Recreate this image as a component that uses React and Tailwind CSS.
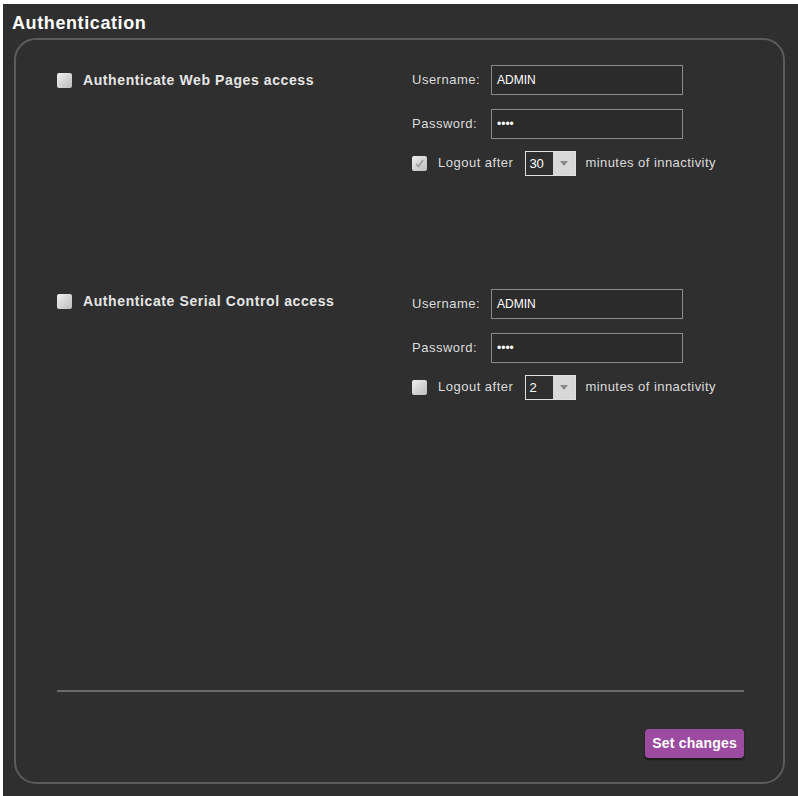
import * as React from "react";

const font = { fontFamily: '"Liberation Sans", Arial, sans-serif' };

export default function App() {
  return (
    <div className="w-[798px] h-[796px] bg-white pt-[4px] pl-[3px]" style={font}>
      <div className="w-full h-full bg-[#2f2f2f] flex flex-col">
        <h1 className="text-white font-bold text-[18px] pl-[9px] pt-[9px] leading-[21px] tracking-[0.6px]">Authentication</h1>
        <div className="mt-[4px] ml-[11px] w-[771px] h-[746px] border-2 border-[#5c5c5c] rounded-[22px] flex flex-col px-[41px]">
          <Block label="Authenticate Web Pages access" top="pt-[25px]" lead="pt-[8px]" logout="30" checked />
          <Block label="Authenticate Serial Control access" top="pt-[113px]" lead="pt-[5px]" logout="2" />
          <div className="flex-1" />
          <div className="h-[2px] bg-[#6a6a6a] mr-[-2px]" />
          <div className="flex justify-end mt-[37px] mb-[24px] mr-[-2px]">
            <button className="h-[29px] px-[7px] rounded-[4px] bg-[#9c4ca0] text-white font-bold text-[14px] tracking-[0.2px] shadow-[0_2px_2px_rgba(0,0,0,0.5)]">
              Set changes
            </button>
          </div>
        </div>
      </div>
    </div>
  );
}

function Block({ label, top, lead, logout, checked }) {
  return (
    <div className={`flex ${top}`}>
      <div className={`w-[355px] flex items-start gap-[11px] ${lead}`}>
        <Box />
        <span className="text-[#e6e6e6] font-bold text-[14px] leading-[15px] tracking-[0.6px]">{label}</span>
      </div>
      <div className="flex flex-col">
        <Field label="Username:" value="ADMIN" />
        <div className="h-[14px]" />
        <Field label="Password:" value="••••" />
        <div className="flex items-center mt-[11px] h-[26px]">
          <Box checked={checked} />
          <span className="ml-[11px] text-[#dcdcdc] text-[13px] tracking-[0.5px]">Logout after</span>
          <div className="ml-[12px] w-[51px] h-[25px] border border-[#e0e0e0] flex">
            <span className="flex-1 text-white text-[13px] pl-[3px] leading-[23px]">{logout}</span>
            <span className="w-[22px] bg-[#d8d8d8] flex items-center justify-center">
              <svg width="8" height="5" viewBox="0 0 8 5"><path d="M0 0h8L4 5z" fill="#8a8a8a" /></svg>
            </span>
          </div>
          <span className="ml-[9px] text-[#dcdcdc] text-[13px] tracking-[0.45px]">minutes of innactivity</span>
        </div>
      </div>
    </div>
  );
}

function Field({ label, value }) {
  return (
    <div className="flex items-center">
      <span className="w-[79px] text-[#dcdcdc] text-[13px] tracking-[0.5px]">{label}</span>
      <div className="w-[192px] h-[30px] border border-[#8a8a8a] bg-[#2b2b2b] text-white text-[12px] pl-[5px] flex items-center">
        {value}
      </div>
    </div>
  );
}

function Box({ checked }) {
  return (
    <span className="w-[15px] h-[15px] shrink-0 rounded-[2px] bg-gradient-to-br from-[#f0f0f0] to-[#bdbdbd] flex items-center justify-center">
      {checked && (
        <svg width="11" height="11" viewBox="0 0 11 11">
          <path d="M2 6l2.5 2.5L9 2" stroke="#9a9a9a" strokeWidth="1.6" fill="none" />
        </svg>
      )}
    </span>
  );
}
